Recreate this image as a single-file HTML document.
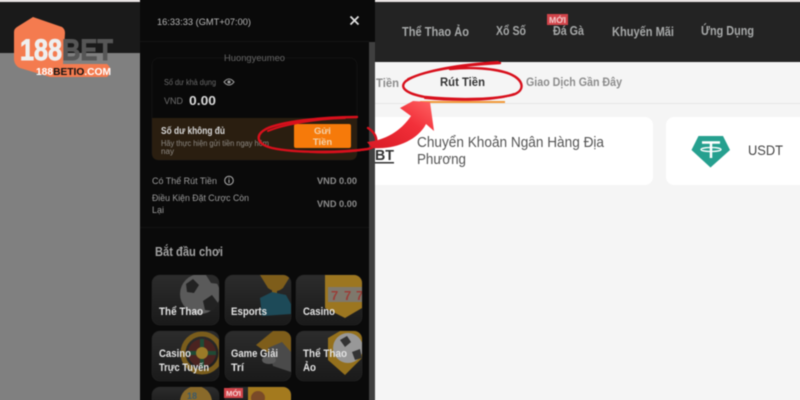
<!DOCTYPE html>
<html><head><meta charset="utf-8"><style>
html,body{margin:0;padding:0;background:#f5f5f5;width:800px;height:400px;overflow:hidden}
body{position:relative}
svg{display:block;position:absolute;left:-8px;top:-8px;filter:blur(.4px)}
text{font-family:"Liberation Sans",sans-serif}
</style></head><body>
<svg width="816" height="416" viewBox="-8 -8 816 416" xmlns="http://www.w3.org/2000/svg">
<defs>
<linearGradient id="ar" x1="0" y1="1" x2="1" y2="0"><stop offset="0" stop-color="#d81a24"/><stop offset=".6" stop-color="#f2303a"/><stop offset="1" stop-color="#ff6464"/></linearGradient>
<linearGradient id="tile" x1="0" y1="0" x2="0" y2="1"><stop offset="0" stop-color="#2c2c2c"/><stop offset="1" stop-color="#1a1a1a"/></linearGradient>
<clipPath id="c1"><rect x="152" y="275" width="67" height="50" rx="8"/></clipPath>
<clipPath id="c2"><rect x="225" y="275" width="66" height="50" rx="8"/></clipPath>
<clipPath id="c3"><rect x="296" y="275" width="66" height="50" rx="8"/></clipPath>
<clipPath id="c4"><rect x="152" y="331" width="67" height="50" rx="8"/></clipPath>
<clipPath id="c5"><rect x="225" y="331" width="66" height="50" rx="8"/></clipPath>
<clipPath id="c6"><rect x="296" y="331" width="66" height="50" rx="8"/></clipPath>
<clipPath id="c7"><rect x="152" y="387" width="67" height="20" rx="8"/></clipPath>
<clipPath id="c8"><rect x="225" y="387" width="66" height="20" rx="8"/></clipPath>
</defs>

<!-- page -->
<rect x="-8" y="-8" width="816" height="416" fill="#f5f5f5"/>
<rect x="-8" y="-8" width="816" height="10" fill="#e9e4e4"/>
<rect x="-8" y="2" width="816" height="60" fill="#232323"/>
<rect x="-8" y="53" width="148" height="355" fill="#808080"/>
<rect x="-8" y="2" width="148" height="51" fill="#1a1a1a"/>

<!-- nav -->
<g fill="#a6a8a8" font-size="12.5" font-weight="700">
<text x="402" y="36" textLength="67" lengthAdjust="spacingAndGlyphs">Thể Thao Ảo</text>
<text x="496" y="35" textLength="30" lengthAdjust="spacingAndGlyphs">Xổ Số</text>
<text x="553" y="35" textLength="31" lengthAdjust="spacingAndGlyphs">Đá Gà</text>
<text x="612" y="36" textLength="62" lengthAdjust="spacingAndGlyphs">Khuyến Mãi</text>
<text x="701" y="35" textLength="53" lengthAdjust="spacingAndGlyphs">Ứng Dụng</text>
</g>
<rect x="547" y="14" width="21" height="11" fill="#d2444a"/>
<text x="549" y="23" font-size="8.5" font-weight="700" fill="#f2c9c9" textLength="17" lengthAdjust="spacingAndGlyphs">MỚI</text>

<!-- tabs -->
<rect x="375" y="103" width="433" height="1" fill="#e6e6e6"/>
<g font-size="12" font-weight="700">
<text x="376" y="87" fill="#8c8c8c" textLength="23" lengthAdjust="spacingAndGlyphs">Tiền</text>
<text x="440" y="86" fill="#333" textLength="45" lengthAdjust="spacingAndGlyphs">Rút Tiền</text>
<text x="526" y="86" fill="#8c8c8c" textLength="96" lengthAdjust="spacingAndGlyphs">Giao Dịch Gần Đây</text>
</g>
<rect x="420" y="101" width="85" height="2" fill="#f29a3a"/>

<!-- cards -->
<rect x="340" y="117" width="313" height="68" rx="8" fill="#fff"/>
<rect x="666" y="117" width="150" height="68" rx="8" fill="#fff"/>
<text x="375" y="160" font-size="14.5" font-weight="700" fill="#333" textLength="19" lengthAdjust="spacingAndGlyphs">BT</text>
<rect x="374" y="162" width="20" height="1.5" fill="#333"/>
<g font-size="14.5" fill="#555">
<text x="417" y="147" textLength="187" lengthAdjust="spacingAndGlyphs">Chuyển Khoản Ngân Hàng Địa</text>
<text x="417" y="164" textLength="49" lengthAdjust="spacingAndGlyphs">Phương</text>
</g>
<path d="M698.500 136H723L730 150L710.500 167.500L691.500 150Z" fill="#26a08f"/>
<path d="M702 142.500H720M711 142.500V158" stroke="#fff" stroke-width="2.500" fill="none"/>
<ellipse cx="711" cy="149.500" rx="10" ry="2" stroke="#fff" stroke-width="1.300" fill="none"/>
<text x="748" y="155" font-size="13.500" fill="#444" textLength="35" lengthAdjust="spacingAndGlyphs">USDT</text>

<!-- logo -->
<path d="M33 17 L62 27 Q65 29 65 33 L63 64 H107 Q114 70 107 77 H50 L20 68 Q15 66 14 60 L14 32 Q14 29 17 27 Z" fill="#f47b4f"/>
<text x="20" y="60" font-size="30" font-weight="700" fill="#efefef" textLength="42" lengthAdjust="spacingAndGlyphs" stroke="#efefef" stroke-width=".9">188</text>
<text x="62" y="60" font-size="30" font-weight="700" fill="#565656" textLength="51" lengthAdjust="spacingAndGlyphs" stroke="#565656" stroke-width=".9">BET</text>
<text x="36" y="75" font-size="10.500" font-weight="700" textLength="75" lengthAdjust="spacingAndGlyphs"><tspan fill="#fff">188</tspan><tspan fill="#111">BETIO</tspan><tspan fill="#fff">.COM</tspan></text>

<!-- panel -->
<rect x="140" y="-8" width="235" height="416" fill="#0a0a0a"/>
<rect x="369" y="42" width="6" height="366" fill="#3f3f3f"/>
<rect x="140" y="41" width="229" height="1" fill="#141414"/>
<text x="157" y="25" font-size="9.500" fill="#b5b5b5" textLength="94" lengthAdjust="spacingAndGlyphs">16:33:33 (GMT+07:00)</text>
<path d="M350.500 16.500L358.500 24.500M358.500 16.500L350.500 24.500" stroke="#e0e0e0" stroke-width="1.800" fill="none"/>

<rect x="152" y="58" width="205" height="102" rx="7" fill="#090909" stroke="#121212"/>
<text x="224" y="61" font-size="9.500" fill="#666" textLength="61" lengthAdjust="spacingAndGlyphs">Huongyeumeo</text>
<text x="164" y="85" font-size="8" fill="#6a6a6a" textLength="52" lengthAdjust="spacingAndGlyphs">Số dư khả dụng</text>
<path d="M224 82Q229 76 234 82Q229 88 224 82Z" stroke="#9a9a9a" stroke-width="1" fill="none"/><circle cx="229" cy="82" r="1.600" fill="#9a9a9a"/>
<text x="164" y="104" font-size="9.500" fill="#6e6e6e" textLength="19" lengthAdjust="spacingAndGlyphs">VND</text>
<text x="189" y="105" font-size="13" font-weight="700" fill="#d8d8d8" textLength="27" lengthAdjust="spacingAndGlyphs">0.00</text>

<path d="M152 118H357V153Q357 160 350 160H159Q152 160 152 153Z" fill="#2a1e10"/>
<text x="161" y="134" font-size="10" font-weight="700" fill="#d8d8d8" textLength="64" lengthAdjust="spacingAndGlyphs">Số dư không đủ</text>
<g font-size="7.800" fill="#8e8a84">
<text x="161" y="146" textLength="108" lengthAdjust="spacingAndGlyphs">Hãy thực hiện gửi tiền ngay hôm</text>
<text x="161" y="154" textLength="13" lengthAdjust="spacingAndGlyphs">nay</text>
</g>
<rect x="294" y="124" width="57" height="24" rx="2" fill="#f67a0a"/>
<g font-size="9.500" font-weight="700" fill="#f3d2ac" text-anchor="middle">
<text x="322.500" y="134">Gửi</text>
<text x="322.500" y="145">Tiền</text>
</g>

<text x="152" y="184" font-size="9.500" fill="#9a9a9a" textLength="65" lengthAdjust="spacingAndGlyphs">Có Thể Rút Tiền</text>
<circle cx="229" cy="180.500" r="4.300" stroke="#b0b0b0" stroke-width="1" fill="none"/>
<path d="M229 179.500V183M229 177.800V178.600" stroke="#b0b0b0" stroke-width="1"/>
<text x="317" y="184" font-size="9.500" font-weight="700" fill="#8c8c8c" textLength="40" lengthAdjust="spacingAndGlyphs">VND 0.00</text>
<g font-size="9.500" fill="#9a9a9a">
<text x="152" y="201" textLength="97" lengthAdjust="spacingAndGlyphs">Điều Kiện Đặt Cược Còn</text>
<text x="152" y="213" textLength="12" lengthAdjust="spacingAndGlyphs">Lại</text>
</g>
<text x="317" y="207" font-size="9.500" font-weight="700" fill="#8c8c8c" textLength="40" lengthAdjust="spacingAndGlyphs">VND 0.00</text>
<rect x="140" y="227" width="229" height="1" fill="#121212"/>
<text x="155" y="256" font-size="12.500" font-weight="700" fill="#a2a2a2" textLength="68" lengthAdjust="spacingAndGlyphs">Bắt đầu chơi</text>

<!-- tiles -->
<g fill="url(#tile)" stroke="#262626" stroke-width=".6">
<rect x="152" y="275" width="67" height="50" rx="8"/>
<rect x="225" y="275" width="66" height="50" rx="8"/>
<rect x="296" y="275" width="66" height="50" rx="8"/>
<rect x="152" y="331" width="67" height="50" rx="8"/>
<rect x="225" y="331" width="66" height="50" rx="8"/>
<rect x="296" y="331" width="66" height="50" rx="8"/>
<rect x="152" y="387" width="67" height="20" rx="8"/>
<rect x="225" y="387" width="66" height="20" rx="8"/>
</g>
<!-- ball -->
<g clip-path="url(#c1)"><circle cx="200" cy="294" r="20" fill="#5a5a5a"/><path d="M186 284L193 279L199 285L194 293L187 292Z" fill="#222"/><path d="M203 301L212 295L218 303L213 311L205 310Z" fill="#222"/><path d="M206 275H219V284L211 283Z" fill="#2a2a2a"/></g>
<!-- esports -->
<g clip-path="url(#c2)"><path d="M260 275H291L283 288Q276 294 268 288Z" fill="#7e5d1a"/><rect x="272" y="288" width="5" height="6" fill="#7e5d1a"/><path d="M260 298L272 292L286 295L291 304V314L262 316Z" fill="#1d4a58"/></g>
<!-- casino -->
<g clip-path="url(#c3)"><path d="M325 275H362V308L345 318L325 308Z" fill="#9c7620"/><rect x="328" y="287" width="34" height="15" fill="#7e786c"/><g fill="#9a3e38" font-size="13" font-weight="700"><text x="331" y="300">7</text><text x="344" y="300">7</text><text x="356" y="300">7</text></g></g>
<!-- roulette -->
<g clip-path="url(#c4)"><circle cx="202" cy="353" r="19" fill="none" stroke="#7a5d1c" stroke-width="5"/><circle cx="202" cy="353" r="14" fill="#4a2320"/><path d="M202 339V367M188 353H216" stroke="#1f4a35" stroke-width="4"/><circle cx="202" cy="353" r="6" fill="#9a7a28"/></g>
<!-- game -->
<g clip-path="url(#c5)"><path d="M256 345L273 331H291V352L266 352Z" fill="#7e5d1a"/><path d="M268 348L282 342L291 352V372L273 366Z" fill="#4a4a4a"/><ellipse cx="269" cy="360" rx="7" ry="4" fill="#5a5a5a"/></g>
<!-- virtual -->
<g clip-path="url(#c6)"><path d="M328 338L340 331H362V358L345 375L328 360Z" fill="#94701c"/><circle cx="348" cy="348" r="15" fill="#989898"/><path d="M340 340L347 336L351 342L345 347Z M352 352L360 349L362 358L355 360Z" fill="#333"/></g>
<!-- bottom -->
<g clip-path="url(#c7)"><circle cx="196" cy="402" r="16" fill="#8a6a2a"/><text x="187" y="399" font-size="9" font-weight="700" fill="#3c5a6a">18</text></g>
<g clip-path="url(#c8)"><rect x="248" y="387" width="43" height="20" fill="#a47a1e"/><circle cx="258" cy="398" r="7" fill="#7a4a28"/></g>
<rect x="224" y="388" width="19" height="10" fill="#d2444a"/>
<text x="226" y="396" font-size="7.500" font-weight="700" fill="#f5d5d5" textLength="15" lengthAdjust="spacingAndGlyphs">MỚI</text>

<g font-size="11" font-weight="700" fill="#e2e2e2">
<text x="159" y="315" textLength="44" lengthAdjust="spacingAndGlyphs">Thể Thao</text>
<text x="231" y="315" textLength="36" lengthAdjust="spacingAndGlyphs">Esports</text>
<text x="303" y="315" textLength="32" lengthAdjust="spacingAndGlyphs">Casino</text>
<text x="159" y="357" textLength="32" lengthAdjust="spacingAndGlyphs">Casino</text>
<text x="159" y="371" textLength="50" lengthAdjust="spacingAndGlyphs">Trực Tuyến</text>
<text x="231" y="357" textLength="47" lengthAdjust="spacingAndGlyphs">Game Giải</text>
<text x="231" y="371" textLength="13" lengthAdjust="spacingAndGlyphs">Trí</text>
<text x="303" y="357" textLength="44" lengthAdjust="spacingAndGlyphs">Thể Thao</text>
<text x="303" y="371" textLength="13" lengthAdjust="spacingAndGlyphs">Ảo</text>
</g>

<!-- red annotations -->
<g fill="none" stroke="#d8101c" stroke-linecap="round">
<path d="M357 117C320 117 280 122 266 129C255 135 256 144 272 148C295 153 340 153 368 149C380 146 378 134 368 128" stroke-width="2.400"/>
<path d="M345 118C315 119 285 124 268 131" stroke-width="2"/>
<path d="M310 152C330 153 355 152 372 148" stroke-width="2"/>
<path d="M500 63C460 65 420 71 406 81C398 88 408 94 425 97C455 100 490 100 512 95C526 91 524 80 510 74C495 68 470 67 450 69" stroke-width="2.400"/>
<path d="M498 62C465 64 430 69 408 79" stroke-width="2"/>
<path d="M425 98C455 101 495 101 514 94" stroke-width="2"/>
</g>
<path d="M367 142C385 140 400 132 411 116L400 108L413 101L430 102L434 131L426 124C418 140 395 150 372 148Z" fill="url(#ar)"/>
</svg>
</body></html>
